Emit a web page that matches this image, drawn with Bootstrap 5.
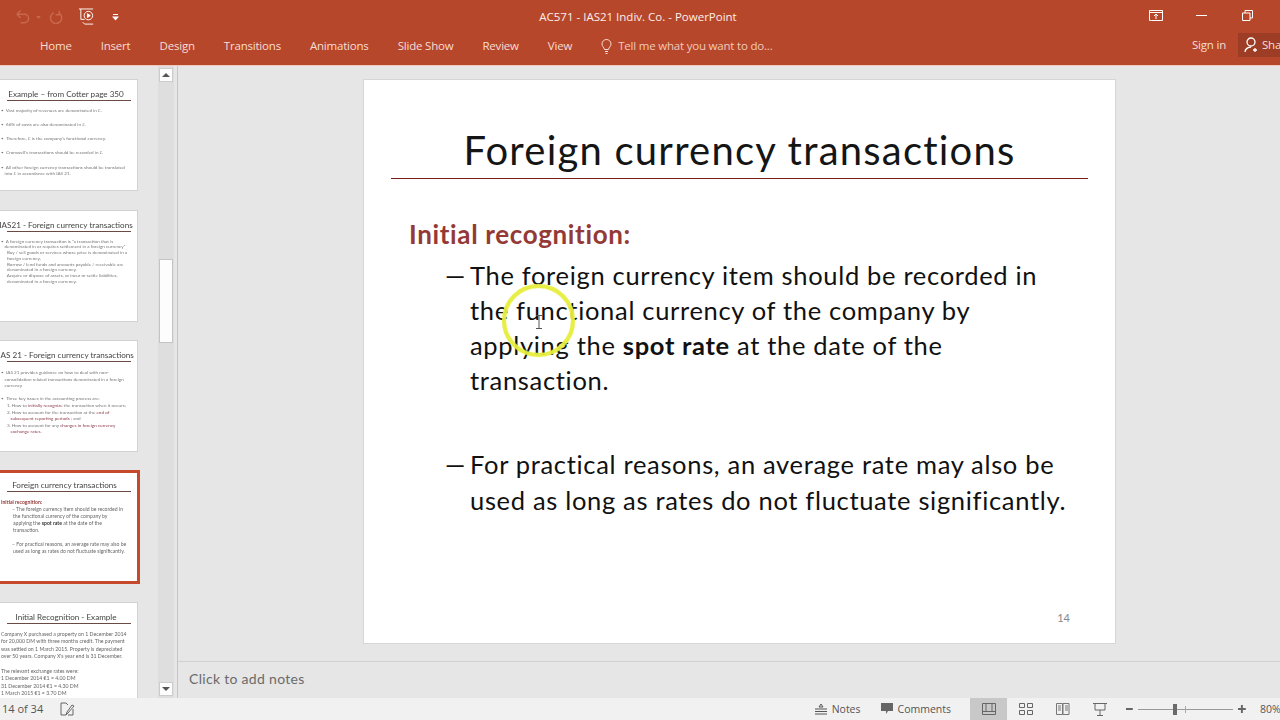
<!doctype html>
<html lang="en"><head><meta charset="utf-8"><title>AC571 - IAS21 Indiv. Co. - PowerPoint</title>
<link href="https://cdn.jsdelivr.net/npm/bootstrap@5.3.0/dist/css/bootstrap.min.css" rel="stylesheet">
<style>
html,body{height:720px;overflow:hidden;background:#e6e6e6}
body{font-family:"Open Sans","Liberation Sans",sans-serif}
.app{width:1280px;height:720px;overflow:hidden}
.ribbon{background:#b7472a;color:#f6ddd5;height:66px;flex:none;border-bottom:1px solid #f0c9bd}
.qat{height:34px;position:relative;padding-left:15px}
.doc-title{width:100%;text-align:center;font-size:11.5px;color:#fbeee9;line-height:34px;position:absolute;left:-2px;top:0}
.tabrow{height:31px;font-size:11.5px;line-height:24px;padding-left:40px;letter-spacing:-.2px}
.tabs{gap:29px}
.share{background:#9d3d25;margin-left:11px;padding:0 0 0 6px;height:24px;gap:3px;width:42px;overflow:hidden;white-space:nowrap}
.workarea{flex:1;min-height:0}
.leftpane{width:178px;flex:none;border-right:1px solid #c6c6c6;overflow:hidden;position:relative}
.thumbs{padding-top:13px;width:158px;gap:18.5px}
.tb{width:150px;height:112px;margin-left:-12px;background:#fff;border:1px solid #d2d2d2;flex:none;overflow:hidden;color:#777;font-family:Lato,sans-serif;font-size:4.6px;line-height:5.8px;padding:0 6px 0 18px;white-space:nowrap;filter:blur(.3px)}
.tb.sel{border:3px solid #c5492a;height:114px;width:152px;padding:0 6px 0 16px;margin-top:-1px;font-size:5.1px;line-height:7px;color:#666}
.tb h6{font-family:Lato,sans-serif;font-weight:400;font-size:8.1px;line-height:10px;color:#444;margin:9px 0 7px;padding:0 6px 1px 0;border-bottom:1px solid #6b4a46;white-space:nowrap}
.tb.sel h6{margin-top:7px;padding-right:9px}
.tb p{margin:0 0 8.2px -6px}
.tb>div{margin-left:-6px}
.tb .r{color:#8e3b4a}
.tb b{color:#333}
.lh3{line-height:6.6px}
.ia{padding-left:11px}
.ib{padding-left:12px}
.gap7{margin-top:7px}
.tbody2{font-size:5.2px;line-height:7.4px;color:#666}
.scrolltrack{width:16px;background:#dedede;flex:none;padding:2px 0}
.sbtn{width:14px;height:14px;background:#fdfdfd;border:1px solid #ccc;flex:none;align-self:center}
.sthumb{width:14px;height:84px;background:#fdfdfd;border:1px solid #c4c4c4;align-self:center;flex:none;margin-top:177px}
.spacer{flex:1}
.stage{flex:1;min-width:0;position:relative}
.slidewrap{padding:13px 0 0 185px;height:595px}
.slide{width:753px;height:565px;background:#fff;border:1px solid #d6d6d6;padding-top:48px;color:#111;font-family:Lato,sans-serif;position:relative}
.slide h1{font-family:Lato,sans-serif;font-weight:400;font-size:40px;line-height:44px;text-align:center;margin:0 27px;padding-bottom:6px;border-bottom:1px solid #7b1c1c;color:#151515;letter-spacing:1.22px}
.rec{color:#943a36;font-weight:700;font-size:26px;line-height:34px;margin:38px 0 6.5px 45px;letter-spacing:.65px}
.blt{font-size:25.5px;line-height:35.2px;padding-left:106px;position:relative;white-space:nowrap;letter-spacing:.68px;margin-bottom:49px}
.blt i{position:absolute;left:81px;font-style:normal;letter-spacing:0}
.pnum{position:absolute;right:45px;top:530px;font-size:11px;color:#888}
.notes{height:37px;border-top:1px solid #d0d0d0;padding-left:11px;line-height:33px;font-size:14px;letter-spacing:.3px;color:#6a6a6a;font-family:Lato,sans-serif}
.status{height:22px;background:#f1f1f1;flex:none;font-size:10.5px;color:#555;line-height:22px;position:relative}
.status svg{display:block}
.slabel{gap:5px}
.viewbtn{width:37px;height:22px;justify-content:center}
.viewbtn.on{background:#c8c8c8}
.zoomtrack{width:98px;height:1px;background:#999;position:relative}
.zoomknob{position:absolute;left:35px;top:-5px;width:4px;height:11px;background:#6a6a6a}
.zoomtick{position:absolute;left:47px;top:-3px;width:1px;height:7px;background:#aaa}
.hl{position:absolute;left:502px;top:284px;width:73px;height:73px;border:4px solid #e6ee3c;border-radius:50%;box-shadow:0 0 1px #e6ee3c,inset 0 0 1px #e6ee3c;pointer-events:none;opacity:.95}
.ibeam{position:absolute;left:536px;top:315px}
</style></head><body>
<div class="app d-flex flex-column position-relative">
 <header class="ribbon">
  <div class="qat d-flex align-items-center">
   <div class="doc-title">AC571 - IAS21 Indiv. Co. - PowerPoint</div>
   <svg width="15" height="16" viewBox="0 0 16 16" fill="none" stroke="#c8694f" stroke-width="1.6"><path d="M2 5h8a4 4 0 0 1 0 9H6M2 5l4-4M2 5l4 4"/></svg>
   <svg style="margin-left:6px" width="5" height="3" viewBox="0 0 6 4" fill="#c8694f"><path d="M0 0h6L3 4z"/></svg>
   <svg style="margin-left:8px" width="15" height="16" viewBox="0 0 16 16" fill="none" stroke="#c8694f" stroke-width="1.6"><path d="M11 1.500v4h-4M11 4a6 6 0 1 1-6-.5"/></svg>
   <svg style="margin-left:14px" width="17" height="18" viewBox="0 0 18 19" fill="none" stroke="#fff"><path d="M1 1h15M3 1v11h4M7 17h9M5 15l2 2"/><circle cx="11" cy="8" r="4.500"/><path d="M10 6l3 2-3 2z" fill="#fff"/></svg>
   <svg style="margin-left:17px" width="7" height="7" viewBox="0 0 7 7" fill="#fff"><path d="M1 0h5v1H1zM0 2.500h7L3.500 6.500z"/></svg>
  </div>
  <div class="tabrow d-flex align-items-start">
   <div class="tabs d-flex">
    <span>Home</span><span>Insert</span><span>Design</span><span>Transitions</span><span>Animations</span><span>Slide Show</span><span>Review</span><span>View</span>
    <span class="d-flex align-items-center" style="gap:6px;color:#f1c9bc"><svg width="11" height="15" viewBox="0 0 11 15" fill="none" stroke="#f6ddd5"><path d="M3.500 10.500C3 8 1 7.500 1 5a4.500 4.500 0 0 1 9 0c0 2.500-2 3-2.500 5.500zM4 12.500h3M4.500 14.500h2"/></svg>Tell me what you want to do...</span>
   </div>
  </div>
  <div class="position-absolute top-0 end-0 d-flex flex-column" style="width:131px;height:64px">
   <div class="d-flex align-items-center" style="height:34px;margin-top:-2px;gap:33px">
    <svg width="14" height="11" viewBox="0 0 14 11" fill="none" stroke="#fff"><path d="M.5.500h13v10H.500zM.5 2.500h13M7 9V4M5 6l2-2 2 2"/></svg>
    <svg width="11" height="1" viewBox="0 0 11 1"><path d="M0 .5h11" stroke="#fff"/></svg>
    <svg style="margin-left:2px" width="11" height="11" viewBox="0 0 11 11" fill="none" stroke="#fff"><path d="M.5 3h7.500v7.500H.5zM3 3V.5h7.500V8H8"/></svg>
   </div>
   <div class="d-flex align-items-start" style="padding-left:43px;margin-top:1px;font-size:11.500px;line-height:24px;letter-spacing:-.2px">
    <span class="text-nowrap" style="width:35px;flex:none">Sign in</span>
    <span class="share d-flex align-items-center"><svg width="15" height="16" viewBox="0 0 15 16" fill="none" stroke="#fff" stroke-width="1.300" style="flex:none"><circle cx="7" cy="5" r="4"/><path d="M1 15c0-3 3-5 6-5M11 11v4M9 13h4"/></svg>Share</span>
   </div>
  </div>
 </header>
 <main class="workarea d-flex">
  <aside class="leftpane d-flex">
   <div class="thumbs d-flex flex-column">
    <div class="tb"><h6 class="d-flex justify-content-center">Example – from Cotter page 350</h6><p>•&nbsp; Vast majority of revenues are denominated in £.</p><p>•&nbsp; 66% of costs are also denominated in £.</p><p>•&nbsp; Therefore, £ is the company's functional currency.</p><p>•&nbsp; Cromwell's transactions should be recorded in £.</p><p style="line-height:6px">•&nbsp; All other foreign currency transactions should be translated<br>&nbsp;&nbsp; into £ in accordance with IAS 21.</p></div>
    <div class="tb"><h6 class="d-flex justify-content-center">IAS21 - Foreign currency transactions</h6><div>•&nbsp; A foreign currency transaction is "a transaction that is<br>&nbsp;&nbsp; denominated in or requires settlement in a foreign currency"<br>&nbsp;&nbsp;&nbsp;&nbsp; Buy / sell goods or services whose price is denominated in a<br>&nbsp;&nbsp;&nbsp;&nbsp; foreign currency,<br>&nbsp;&nbsp;&nbsp;&nbsp; Borrow / lend funds and amounts payable / receivable are<br>&nbsp;&nbsp;&nbsp;&nbsp; denominated in a foreign currency,<br>&nbsp;&nbsp;&nbsp;&nbsp; Acquire or dispose of assets, or incur or settle liabilities,<br>&nbsp;&nbsp;&nbsp;&nbsp; denominated in a foreign currency.</div></div>
    <div class="tb"><h6 class="d-flex justify-content-center">IAS 21 - Foreign currency transactions</h6><div class="lh3">•&nbsp; IAS 21 provides guidance on how to deal with non-<br>&nbsp;&nbsp; consolidation related transactions denominated in a foreign<br>&nbsp;&nbsp; currency<br><br>•&nbsp; Three key issues in the accounting process are:<br>&nbsp;&nbsp;&nbsp;&nbsp; 1. How to <span class="r">initially recognize</span> the transaction when it occurs;<br>&nbsp;&nbsp;&nbsp;&nbsp; 2. How to account for the transaction at the <span class="r">end of</span><br>&nbsp;&nbsp;&nbsp;&nbsp;&nbsp;&nbsp;&nbsp; <span class="r">subsequent reporting periods</span> ; and<br>&nbsp;&nbsp;&nbsp;&nbsp; 3. How to account for any <span class="r">changes in foreign currency</span><br>&nbsp;&nbsp;&nbsp;&nbsp;&nbsp;&nbsp;&nbsp; <span class="r">exchange rates.</span></div></div>
    <div class="tb sel"><h6 class="d-flex justify-content-center">Foreign currency transactions</h6><div><span style="color:#943a36;font-weight:700">Initial recognition:</span><div class="ia">– The foreign currency item should be recorded in</div><div class="ib">the functional currency of the company by<br>applying the <b>spot rate</b> at the date of the<br>transaction.</div><div class="ia gap7">– For practical reasons, an average rate may also be</div><div class="ib">used as long as rates do not fluctuate significantly.</div></div></div>
    <div class="tb"><h6 class="d-flex justify-content-center">Initial Recognition - Example</h6><div class="tbody2">Company X purchased a property on 1 December 2014<br>for 20,000 DM with three months credit. The payment<br>was settled on 1 March 2015. Property is depreciated<br>over 50 years. Company X's year end is 31 December.<br><br>The relevant exchange rates were:<br>1 December 2014 €1 = 4.00 DM<br>31 December 2014 €1 = 4.30 DM<br>1 March 2015 €1 = 3.70 DM</div></div>
   </div>
   <div class="scrolltrack d-flex flex-column">
    <div class="sbtn d-flex align-items-center justify-content-center"><svg width="8" height="4" viewBox="0 0 8 4" fill="#555"><path d="M4 0l4 4H0z"/></svg></div>
    <div class="sthumb"></div>
    <div class="spacer"></div>
    <div class="sbtn d-flex align-items-center justify-content-center"><svg width="8" height="4" viewBox="0 0 8 4" fill="#555"><path d="M0 0h8L4 4z"/></svg></div>
   </div>
  </aside>
  <section class="stage">
   <div class="slidewrap">
    <article class="slide">
     <h1>Foreign currency transactions</h1>
     <div class="rec">Initial recognition:</div>
     <div class="blt"><i>—</i>The foreign currency item should be recorded in<br>the functional currency of the company by<br>applying the <b>spot rate</b> at the date of the<br>transaction.</div>
     <div class="blt"><i>—</i>For practical reasons, an average rate may also be<br>used as long as rates do not fluctuate significantly.</div>
     <div class="pnum">14</div>
    </article>
   </div>
   <div class="notes">Click to add notes</div>
  </section>
 </main>
 <footer class="status d-flex align-items-center">
  <span style="font-size:11px;margin-left:2px">14 of 34</span>
  <svg style="margin-left:17px" width="16" height="14" viewBox="0 0 16 14" fill="none" stroke="#666"><path d="M6 13H1V1h5l2 2M8 13h5V7M6 13l2-2 6-7-2-1-5 7z"/></svg>
  <div class="ms-auto d-flex align-items-center">
   <span class="slabel d-flex align-items-center"><svg width="12" height="11" viewBox="0 0 12 11" fill="none" stroke="#555"><path d="M6 0L4 3h4zM0 5h12M0 7.500h12M0 10h12"/></svg>Notes</span>
   <span class="slabel d-flex align-items-center" style="margin-left:20px;margin-right:19px"><svg width="12" height="12" viewBox="0 0 12 12" fill="#666"><path d="M0 0h12v8H7l-2 3V8H0z"/></svg>Comments</span>
   <span class="viewbtn on d-flex align-items-center"><svg width="14" height="12" viewBox="0 0 14 12" fill="none" stroke="#666"><path d="M.5.5h13v11H.5zM4 .5v8h6V.5M.5 8.500h13"/></svg></span>
   <span class="viewbtn d-flex align-items-center"><svg width="14" height="12" viewBox="0 0 14 12" fill="none" stroke="#666"><path d="M.5.5h5v4h-5zM8.500.5h5v4h-5zM.5 7.500h5v4h-5zM8.500 7.500h5v4h-5z"/></svg></span>
   <span class="viewbtn d-flex align-items-center"><svg width="14" height="12" viewBox="0 0 14 12" fill="none" stroke="#777"><path d="M.5.500h6v11h-6zM7 .5h6v11H7zM2 3h3M2 5h3M2 7h3M9 3h3M9 5h3M9 7h3"/></svg></span>
   <span class="viewbtn d-flex align-items-center"><svg width="14" height="13" viewBox="0 0 14 13" fill="none" stroke="#666"><path d="M0 .5h14M2 .5v6.500h10V.5M7 7v5M4 12.500h6"/></svg></span>
   <span class="d-flex align-items-center" style="margin-left:8px;gap:5px;width:120px"><svg width="7" height="2" viewBox="0 0 7 2" fill="#666"><path d="M0 0h7v2H0z"/></svg><span class="zoomtrack"><span class="zoomknob"></span><span class="zoomtick"></span></span><svg width="8" height="8" viewBox="0 0 8 8" fill="#666"><path d="M3 0h2v3h3v2H5v3H3V5H0V3h3z"/></svg></span>
   <span class="text-nowrap" style="width:20px;margin-left:14px;overflow:hidden">80%</span>
  </div>
 </footer>
 <div class="hl"></div>
 <svg class="ibeam" width="6" height="14" viewBox="0 0 6 14" fill="none" stroke="#555"><path d="M0 .5h6M3 .5v13M0 13.500h6"/></svg>
</div>
<script src="https://cdn.jsdelivr.net/npm/bootstrap@5.3.0/dist/js/bootstrap.bundle.min.js"></script>
</body></html>
